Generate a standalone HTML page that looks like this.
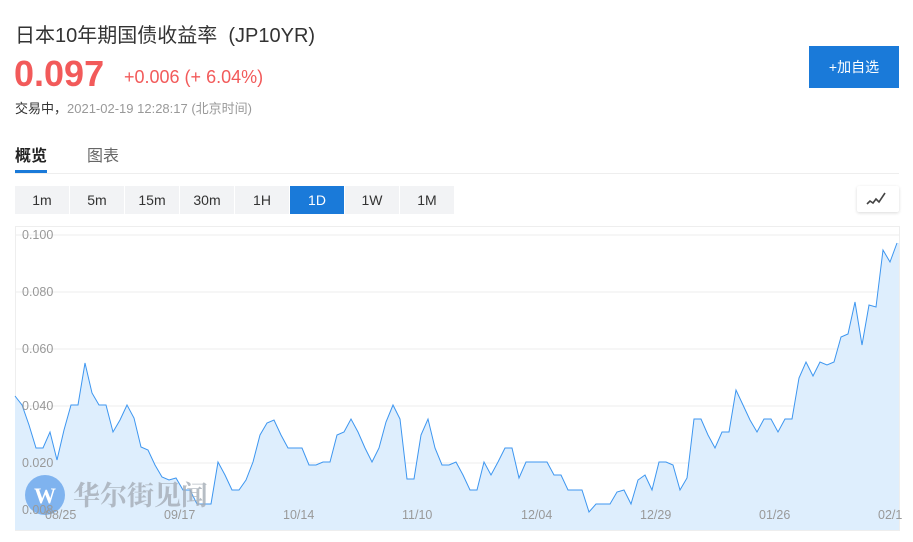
<!DOCTYPE html>
<html><head><meta charset="utf-8"><style>
*{margin:0;padding:0;box-sizing:border-box}
body{width:913px;height:542px;background:#fff;font-family:"Liberation Sans","Noto Sans CJK SC",sans-serif;position:relative;overflow:hidden;color:#333}
.a{position:absolute;white-space:nowrap}
.btn{position:absolute;top:186px;height:28px;width:54px;background:#f2f3f5;font-size:14px;line-height:28px;text-align:center;color:#333}
</style></head><body>
<div class="a" style="left:15px;top:19px;font-size:20px;color:#333">日本10年期国债收益率&nbsp;&nbsp;(JP10YR)</div>
<div class="a" style="left:14px;top:53px;font-size:36px;font-weight:bold;color:#f25a5a">0.097</div>
<div class="a" style="left:124px;top:67px;font-size:18px;color:#f25a5a">+0.006 (+ 6.04%)</div>
<div class="a" style="left:15px;top:98px;font-size:13px;color:#333">交易中，<span style="color:#999">2021-02-19 12:28:17 (北京时间)</span></div>
<div class="a" style="left:809px;top:46px;width:90px;height:42px;background:#1a7ad9;color:#fff;font-size:14px;line-height:42px;text-align:center">+加自选</div>
<div class="a" style="left:15px;top:142px;font-size:16px;font-weight:bold;color:#222">概览</div>
<div class="a" style="left:87px;top:142px;font-size:16px;color:#666">图表</div>
<div class="a" style="left:15px;top:173px;width:884px;height:1px;background:#eee"></div>
<div class="a" style="left:15px;top:170px;width:32px;height:3px;background:#1a7ad9"></div>
<div class="btn" style="left:15px">1m</div>
<div class="btn" style="left:70px">5m</div>
<div class="btn" style="left:125px">15m</div>
<div class="btn" style="left:180px">30m</div>
<div class="btn" style="left:235px">1H</div>
<div class="btn" style="left:290px;background:#1a7ad9;color:#fff">1D</div>
<div class="btn" style="left:345px">1W</div>
<div class="btn" style="left:400px">1M</div>
<div class="a" style="left:857px;top:186px;width:42px;height:26px;background:#fff;box-shadow:0 1px 3px rgba(0,0,0,.15);border-radius:2px">
<svg width="42" height="26"><polyline points="10,18 13,15 16,17 19,13 22,16 28,7" fill="none" stroke="#444" stroke-width="1.6"/></svg></div>
<svg class="a" style="left:0;top:0" width="913" height="542">
<rect x="15.5" y="226.5" width="884" height="304" fill="none" stroke="#eee"/>
<g stroke="#eee"><line x1="16" x2="899" y1="235" y2="235"/><line x1="16" x2="899" y1="292" y2="292"/><line x1="16" x2="899" y1="349" y2="349"/><line x1="16" x2="899" y1="406" y2="406"/><line x1="16" x2="899" y1="463" y2="463"/></g>
<polygon fill="#deeefd" points="15,530 15,396 22,405 29,425 36,448 43,448 50,432 57,460 64,430 71,405 78,405 85,363 92,393 99,405 106,405 113,432 120,420 127,405 134,418 141,447 148,450 155,465 162,477 169,480 176,478 183,490 190,490 197,504 204,504 211,504 218,462 225,475 232,490 239,490 246,480 253,462 260,435 267,423 274,420 281,435 288,448 295,448 302,448 309,465 316,465 323,462 330,462 337,435 344,432 351,419 358,432 365,448 372,462 379,448 386,422 393,405 400,419 407,479 414,479 421,435 428,419 435,448 442,465 449,465 456,462 463,475 470,490 477,490 484,462 491,475 498,462 505,448 512,448 519,478 526,462 533,462 540,462 547,462 554,475 561,475 568,490 575,490 582,490 589,512 596,504 603,504 610,504 617,492 624,490 631,504 638,480 645,475 652,490 659,462 666,462 673,465 680,490 687,478 694,419 701,419 708,435 715,448 722,432 729,432 736,390 743,405 750,420 757,432 764,419 771,419 778,432 785,419 792,419 799,378 806,362 813,376 820,362 827,365 834,362 841,337 848,334 855,302 862,345 869,305 876,307 883,250 890,262 897,243 899,243 899,530"/>
<polyline fill="none" stroke="#3d96f0" stroke-width="1" points="15,396 22,405 29,425 36,448 43,448 50,432 57,460 64,430 71,405 78,405 85,363 92,393 99,405 106,405 113,432 120,420 127,405 134,418 141,447 148,450 155,465 162,477 169,480 176,478 183,490 190,490 197,504 204,504 211,504 218,462 225,475 232,490 239,490 246,480 253,462 260,435 267,423 274,420 281,435 288,448 295,448 302,448 309,465 316,465 323,462 330,462 337,435 344,432 351,419 358,432 365,448 372,462 379,448 386,422 393,405 400,419 407,479 414,479 421,435 428,419 435,448 442,465 449,465 456,462 463,475 470,490 477,490 484,462 491,475 498,462 505,448 512,448 519,478 526,462 533,462 540,462 547,462 554,475 561,475 568,490 575,490 582,490 589,512 596,504 603,504 610,504 617,492 624,490 631,504 638,480 645,475 652,490 659,462 666,462 673,465 680,490 687,478 694,419 701,419 708,435 715,448 722,432 729,432 736,390 743,405 750,420 757,432 764,419 771,419 778,432 785,419 792,419 799,378 806,362 813,376 820,362 827,365 834,362 841,337 848,334 855,302 862,345 869,305 876,307 883,250 890,262 897,243"/>
<circle cx="45" cy="495" r="20" fill="#6fa8ec" opacity=".85"/>
<text x="45" y="503" font-size="22" font-weight="bold" fill="#fff" text-anchor="middle" font-family="Liberation Serif,serif">W</text>
<text x="73" y="505" font-size="27" fill="#a5adb6" font-weight="bold" font-family="Noto Serif CJK SC,serif" opacity=".8">华尔街见闻</text>
<g font-size="12.5" fill="#999"><text x="22" y="239">0.100</text><text x="22" y="296">0.080</text><text x="22" y="353">0.060</text><text x="22" y="410">0.040</text><text x="22" y="467">0.020</text><text x="22" y="514">0.008</text>
<text x="45" y="519">08/25</text><text x="164" y="519">09/17</text><text x="283" y="519">10/14</text><text x="402" y="519">11/10</text><text x="521" y="519">12/04</text><text x="640" y="519">12/29</text><text x="759" y="519">01/26</text><text x="878" y="519">02/1</text></g>
</svg>
</body></html>
